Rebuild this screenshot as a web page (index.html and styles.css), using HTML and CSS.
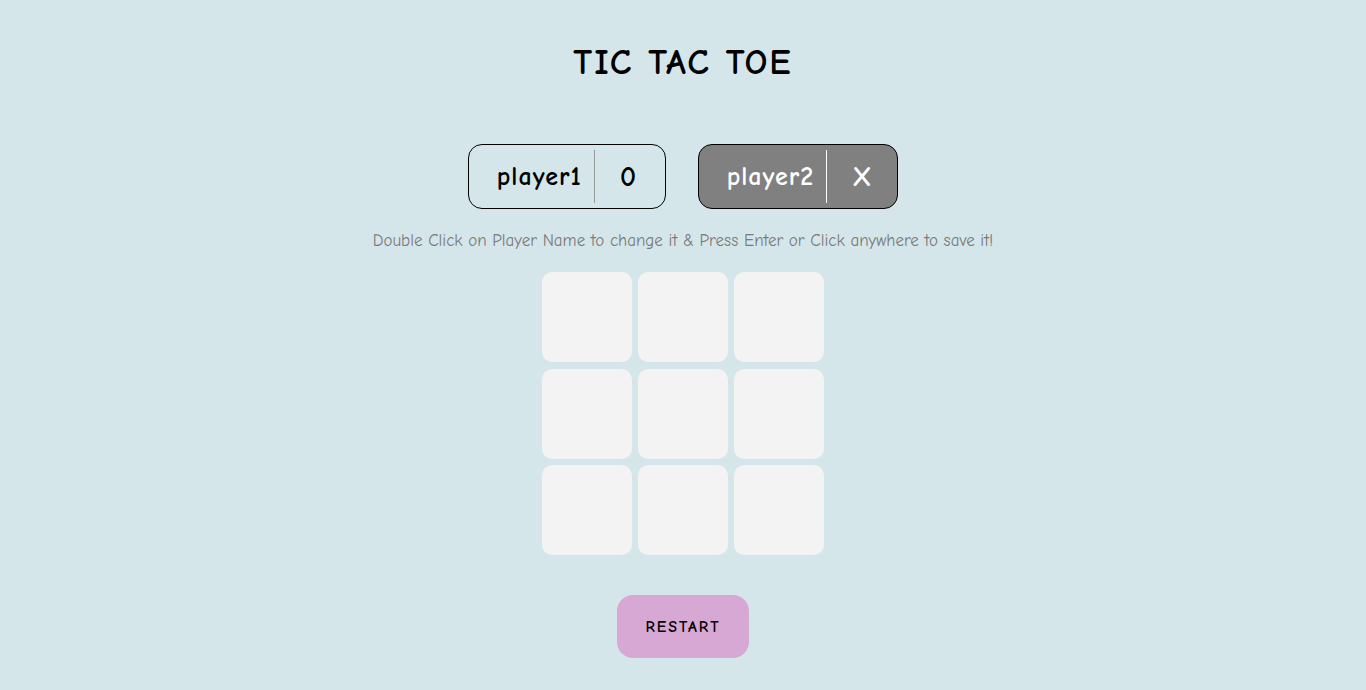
FILE: index.html
```html
<!DOCTYPE html>
<html lang="en">
<head>
<meta charset="utf-8">
<title>Tic Tac Toe</title>
<link rel="stylesheet" href="styles.css">
</head>
<body>
<main class="app">
  <h1 class="title">TIC TAC TOE</h1>
  <div class="players">
    <div class="player">
      <span class="name">player1</span>
      <span class="sep"></span>
      <span class="mark">0</span>
    </div>
    <div class="player active">
      <span class="name">player2</span>
      <span class="sep"></span>
      <span class="mark">X</span>
    </div>
  </div>
  <p class="hint">Double Click on Player Name to change it &amp; Press Enter or Click anywhere to save it!</p>
  <div class="board">
    <div class="cell"></div><div class="cell"></div><div class="cell"></div>
    <div class="cell"></div><div class="cell"></div><div class="cell"></div>
    <div class="cell"></div><div class="cell"></div><div class="cell"></div>
  </div>
  <button class="restart">RESTART</button>
</main>
</body>
</html>
```
FILE: styles.css
```css
html, body {
  margin: 0;
  padding: 0;
  background: #d4e6ea;
  font-family: "Comic Sans MS", "Comic Neue", "DejaVu Sans", sans-serif;
}
.app {
  display: flex;
  flex-direction: column;
  align-items: center;
  height: 690px;
}
.title {
  margin: 41px 0 0;
  font-size: 36px;
  line-height: 44px;
  letter-spacing: 2px;
  font-weight: bold;
  color: #000;
}
.players {
  display: flex;
  gap: 32px;
  margin-top: 59px;
}
.player {
  display: flex;
  align-items: center;
  height: 63px;
  border: 1px solid #000;
  border-radius: 14px;
  padding: 0 28px 0 28px;
  color: #000;
}
.player.active {
  background: #808080;
  color: #fff;
}
.name {
  font-size: 26px;
  letter-spacing: 1px;
  font-weight: bold;
}
.sep {
  width: 1px;
  height: 53px;
  background: #999;
  margin: 0 25px 0 12px;
}
.player.active .sep {
  background: #fff;
}
.mark {
  width: 17px;
  text-align: center;
  font-size: 28px;
  font-weight: bold;
}
.hint {
  margin: 20px 0 0;
  font-size: 17px;
  line-height: 24px;
  color: #7a7a7a;
}
.board {
  display: grid;
  grid-template-columns: repeat(3, 90px);
  grid-auto-rows: 90px;
  gap: 6.5px 6px;
  margin-top: 19px;
}
.cell {
  background: #f3f3f3;
  border-radius: 10px;
}
.restart {
  margin-top: 40px;
  width: 132px;
  height: 63px;
  border: none;
  border-radius: 16px;
  background: #d8a8d5;
  font-family: inherit;
  font-size: 16px;
  letter-spacing: 2px;
  font-weight: bold;
  color: #000;
  padding: 0;
}
```
